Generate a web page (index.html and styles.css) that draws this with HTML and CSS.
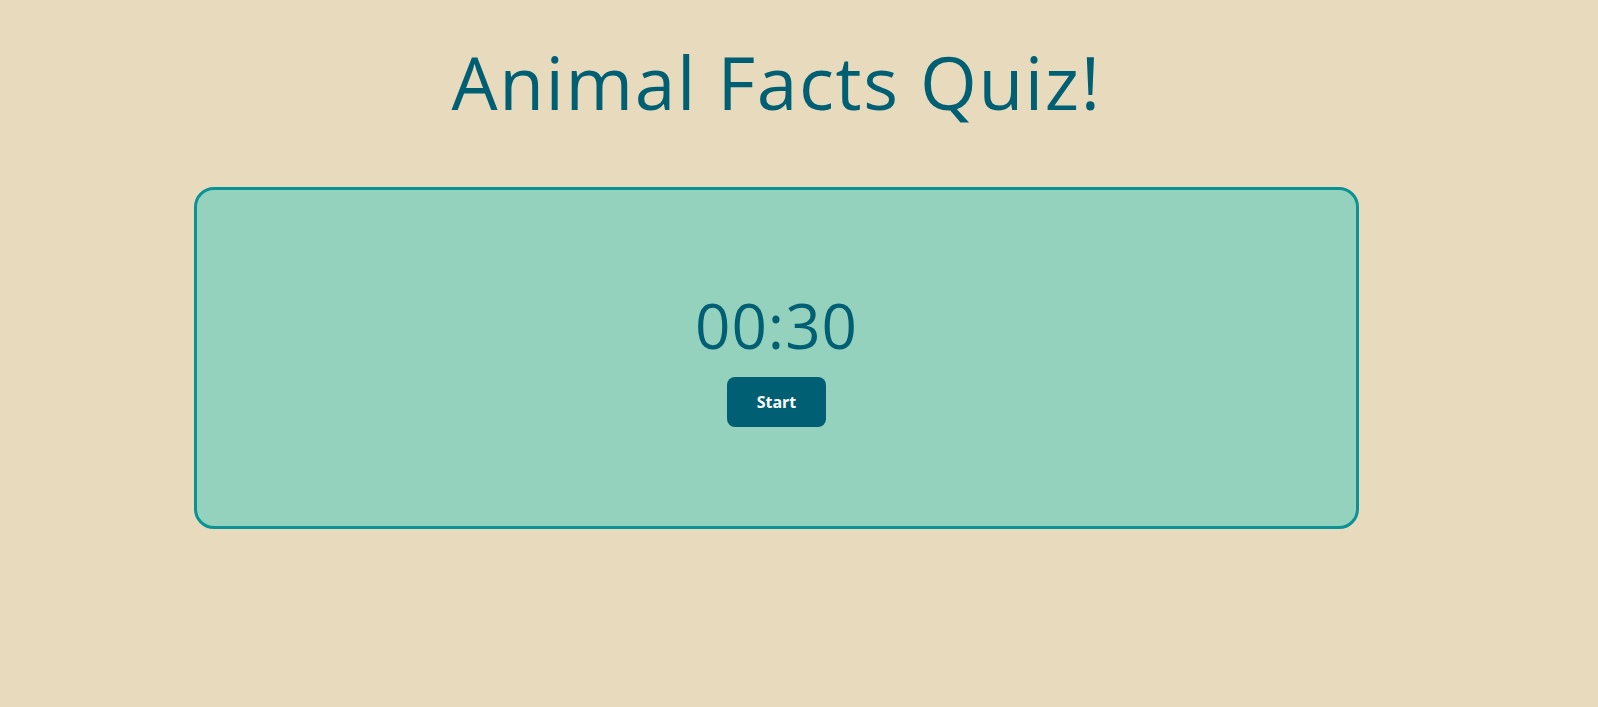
FILE: index.html
```html
<!DOCTYPE html>
<html lang="en">
<head>
<meta charset="utf-8">
<title>Animal Facts Quiz!</title>
<link rel="stylesheet" href="styles.css">
</head>
<body>
<main class="page">
  <h1 class="title">Animal Facts Quiz!</h1>
  <section class="card">
    <div class="timer">00:30</div>
    <button class="start-btn" type="button">Start</button>
  </section>
</main>
</body>
</html>
```

FILE: styles.css
```css
html, body {
  margin: 0;
  padding: 0;
  background: #e8dabd;
}

body {
  font-family: "Open Sans", "Liberation Sans", sans-serif;
  color: #005f73;
}

.page {
  width: 1553px;
  display: flex;
  flex-direction: column;
  align-items: center;
}

.title {
  margin: 45px 0 69px;
  font-size: 73px;
  line-height: 1;
  font-weight: 400;
  letter-spacing: 1.6px;
  color: #005f73;
}

.card {
  box-sizing: border-box;
  width: 1165px;
  padding: 104px 0 99px;
  border: 3px solid #0a9396;
  border-radius: 20px;
  background: #94d2bd;
  display: flex;
  flex-direction: column;
  align-items: center;
}

.timer {
  font-size: 62px;
  line-height: 1;
  font-weight: 400;
  color: #005f73;
  letter-spacing: 1px;
}

.start-btn {
  margin-top: 21px;
  width: 99px;
  height: 50px;
  border: none;
  border-radius: 8px;
  background: #005f73;
  color: #ffffff;
  font-family: "Open Sans", "Liberation Sans", sans-serif;
  font-size: 16px;
  font-weight: 700;
  cursor: pointer;
}
```
